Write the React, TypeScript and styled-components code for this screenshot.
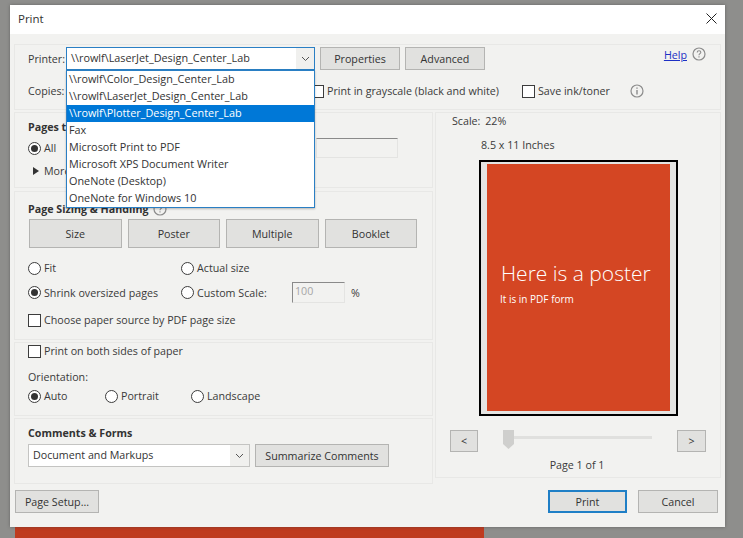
import React from "react";
import styled, { createGlobalStyle } from "styled-components";

const Global = createGlobalStyle`
  html, body { margin: 0; padding: 0; background: #8e8e8c; }
  body { width: 743px; height: 538px; overflow: hidden; font-family: "Open Sans", "Noto Sans", sans-serif; font-size: 10.7px; color: #3a3a3a; }
  * { box-sizing: border-box; }
`;

const Stage = styled.div`
  display: flex; flex-direction: column; align-items: flex-start;
  width: 743px; height: 538px; padding: 5px 0 0 10px;
`;
const Win = styled.div`
  position: relative; width: 715px; height: 522px; background: #f2f2f0;
  display: flex; flex-direction: column; box-shadow: 0 0 3px rgba(60,60,60,.5);
`;
const Strip = styled.div`
  width: 469px; height: 11px; margin-left: 5px; background: #bf3b1f;
`;
const TitleBar = styled.div`
  height: 29px; background: #fff; display: flex; align-items: center; justify-content: space-between;
  padding: 0 7px 2px 8px; font-size: 11.5px; color: #333; flex: none;
`;
const Body = styled.div`
  flex: 1; display: flex; flex-direction: column; padding: 10px 4px 0 4px;
`;
const Panel = styled.div<{ $h: number }>`
  height: ${p => p.$h}px; border: 1px solid #e8e8e6; flex: none;
`;
const TopPanel = styled(Panel)`
  display: flex; flex-direction: column; padding: 2px 13px 0 13px;
`;
const Row = styled.div<{ $gap?: number; $mt?: number }>`
  display: flex; align-items: center; gap: ${p => p.$gap ?? 0}px; margin-top: ${p => p.$mt ?? 0}px;
`;
const Label = styled.span<{ $w?: number; $mt?: number }>`
  white-space: nowrap; line-height: 14px; margin-top: ${p => p.$mt ?? 0}px;
  ${p => (p.$w ? `width:${p.$w}px; flex:none;` : "")}
`;
const Select = styled.div<{ $w: number; $focus?: boolean }>`
  width: ${p => p.$w}px; height: 23px; flex: none; display: flex; align-items: stretch;
  border: 1px solid ${p => (p.$focus ? "#2a7fc4" : "#c4c4c2")}; background: #fff;
`;
const SelectText = styled.div<{ $fs?: number }>`
  flex: 1; padding-left: 4px; line-height: 20px; color: #333; white-space: nowrap;
  font-size: ${p => p.$fs ?? 10.7}px;
`;
const SelectArrow = styled.div<{ $w: number }>`
  width: ${p => p.$w}px; background: #f0f0ee; display: flex; align-items: center; justify-content: center;
`;
const Btn = styled.div<{ $w: number; $h?: number; $primary?: boolean }>`
  width: ${p => p.$w}px; height: ${p => p.$h ?? 23}px; flex: none; display: flex; align-items: center; justify-content: center;
  background: #e1e1df; border: ${p => (p.$primary ? "2px solid #1f7fc6" : "1px solid #b4b4b2")};
  color: #333; white-space: nowrap;
`;
const BtnGroup = styled.div`
  display: flex; gap: 5px; margin-left: 5px;
`;
const HelpBox = styled.div`
  display: flex; align-items: center; gap: 5px; margin: 0 1px 0 auto; align-self: flex-start; height: 14px;
`;
const HelpLink = styled.span`
  color: #1d2fc4; text-decoration: underline; line-height: 14px; padding-top: 2px;
`;
const Main = styled.div`
  display: grid; grid-template-columns: 419px 286px; column-gap: 2px; margin-top: 2px; height: 372px;
`;
const Left = styled.div`
  display: flex; flex-direction: column;
`;
const LPanel = styled(Panel)<{ $mt?: number }>`
  margin-top: ${p => p.$mt ?? 0}px; padding: 0 13px; display: flex; flex-direction: column; position: relative;
`;
const Title = styled.div<{ $mt: number }>`
  font-weight: 700; color: #333; line-height: 14px; margin-top: ${p => p.$mt}px; display: flex; align-items: center; gap: 4px;
`;
const Circle = styled.span<{ $on?: boolean }>`
  width: 13px; height: 13px; border-radius: 50%; border: 1px solid #3c3c3c; background: #fff; flex: none;
  display: inline-flex; align-items: center; justify-content: center;
  &::after { content: ""; width: 7px; height: 7px; border-radius: 50%; background: ${p => (p.$on ? "#333" : "transparent")}; }
`;
const Box = styled.span`
  width: 13px; height: 13px; border: 1px solid #3c3c3c; background: #fff; flex: none; display: inline-block;
`;
const Opt = styled.span<{ $w?: number }>`
  display: inline-flex; align-items: center; gap: 3px; white-space: nowrap; flex: none;
  ${p => (p.$w ? `width:${p.$w}px;` : "")}
`;
const Disclosure = styled.span`
  display: inline-flex; align-items: center; gap: 5px; margin-left: 5px; white-space: nowrap;
`;
const BtnGrid = styled.div`
  display: flex; gap: 6px; margin-top: 3px; margin-left: 1px;
`;
const ScaleInput = styled.div`
  width: 53px; height: 21px; border: 1px solid #e4e4e2; border-top: 1px solid #8a8a8a; border-left: 1px solid #8a8a8a;
  color: #a5a5a5; padding-left: 2px; line-height: 17px; background: #f2f2f0; flex: none; margin-right: 6px;
`;
const PagesInput = styled.div`
  width: 82px; height: 20px; border: 1px solid #e4e4e2; border-top: 1px solid #8a8a8a; flex: none;
`;
const Preview = styled(Panel)`
  display: flex; flex-direction: column; position: relative;
`;
const ScaleLine = styled.div`
  margin: 1px 0 0 16px; line-height: 14px; word-spacing: 2px;
`;
const SizeLine = styled.div`
  margin: 10px 0 0 45px; line-height: 14px;
`;
const Sheet = styled.div`
  width: 199px; height: 256px; margin: 8px 0 0 43px; border: 2px solid #000; background: #e4e4e2; padding: 2px 6px 3px 6px; flex: none;
`;
const Slide = styled.div`
  width: 100%; height: 100%; background: #d44623; color: #fff; padding-left: 14px; display: flex; flex-direction: column;
`;
const Head = styled.div`
  font-size: 21px; font-weight: 300; line-height: 26px; margin-top: 96px; white-space: nowrap;
`;
const Sub = styled.div`
  font-size: 10px; line-height: 14px; margin-top: 6px; white-space: nowrap; margin-left: -1px;
`;
const NavRow = styled.div`
  display: flex; align-items: flex-start; margin: 14px 0 0 14px;
`;
const SliderWrap = styled.div`
  position: relative; width: 149px; height: 20px; margin: 0 25px 0 25px; flex: none;
`;
const Track = styled.div`
  position: absolute; left: 0; right: 0; top: 6px; height: 3px; background: #e0e0de;
`;
const PageCount = styled.div`
  text-align: center; line-height: 14px; margin-top: 6px; padding-right: 2px;
`;
const Footer = styled.div`
  display: flex; align-items: center; margin: 6px 3px 0 1px;
`;
const Spacer = styled.div<{ $w?: number }>`
  ${p => (p.$w ? `width:${p.$w}px; flex:none;` : "flex:1;")}
`;
const Menu = styled.div`
  position: absolute; left: 56px; top: 65px; width: 249px; height: 138px; background: #fff;
  border: 1px solid #2a7fc4; box-shadow: 0 1px 2px rgba(0,0,0,.25); z-index: 5; padding: 0;
`;
const MenuItem = styled.div<{ $sel?: boolean }>`
  height: 17px; line-height: 16px; padding-left: 2px; white-space: nowrap; font-size: 10.85px;
  color: ${p => (p.$sel ? "#fff" : "#333")}; background: ${p => (p.$sel ? "#0078d7" : "#fff")};
`;

const Chevron = () => (
  <svg width="9" height="6" viewBox="0 0 9 6" fill="none" stroke="#555" strokeWidth="1"><path d="M1 1l3.5 3.5L8 1" /></svg>
);
const X = () => (
  <svg width="13" height="13" viewBox="0 0 13 13" stroke="#222" strokeWidth="1" fill="none"><path d="M1.5 1.5l10 10M11.5 1.5l-10 10" /></svg>
);
const Q = ({ c = "?" }: { c?: string }) => (
  <svg width="14" height="14" viewBox="0 0 14 14" style={{ flex: "none" }}>
    <circle cx="7" cy="7" r="6" fill="none" stroke="#8c8c8c" strokeWidth="1.2" />
    {c === "?" ? (
      <path d="M5.2 5.4c0-1 .8-1.6 1.8-1.6s1.8.6 1.8 1.5c0 1.4-1.8 1.4-1.8 2.9M7 9.3v1.2" fill="none" stroke="#8c8c8c" strokeWidth="1.1" />
    ) : (
      <path d="M7 3.4v1.3M7 6v4.6" fill="none" stroke="#8c8c8c" strokeWidth="1.4" />
    )}
  </svg>
);
const Tri = () => (
  <svg width="6" height="8" viewBox="0 0 6 8" style={{ flex: "none" }}><path d="M0 0l6 4-6 4z" fill="#333" /></svg>
);
const Thumb = () => (
  <svg width="11" height="19" viewBox="0 0 11 19" style={{ position: "absolute", left: 0, top: 0 }}>
    <path d="M0 0h11v14l-5.5 5L0 14z" fill="#cfcfcd" />
  </svg>
);

const printers = [
  "\\\\rowlf\\Color_Design_Center_Lab",
  "\\\\rowlf\\LaserJet_Design_Center_Lab",
  "\\\\rowlf\\Plotter_Design_Center_Lab",
  "Fax",
  "Microsoft Print to PDF",
  "Microsoft XPS Document Writer",
  "OneNote (Desktop)",
  "OneNote for Windows 10",
];

export default function App() {
  return (
    <Stage>
      <Global />
      <Win>
        <TitleBar>
          <span>Print</span>
          <X />
        </TitleBar>
        <Body>
          <TopPanel $h={66}>
            <Row>
              <Label $w={38}>Printer:</Label>
              <Select $w={249} $focus>
                <SelectText $fs={10.85}>\\rowlf\LaserJet_Design_Center_Lab</SelectText>
                <SelectArrow $w={18}><Chevron /></SelectArrow>
              </Select>
              <BtnGroup>
                <Btn $w={80}>Properties</Btn>
                <Btn $w={80}>Advanced</Btn>
              </BtnGroup>
              <HelpBox>
                <HelpLink>Help</HelpLink>
                <Q />
              </HelpBox>
            </Row>
            <Row $mt={14}>
              <Label $w={283}>Copies:</Label>
              <Opt $w={211}><Box />Print in grayscale (black and white)</Opt>
              <Opt $w={108}><Box />Save ink/toner</Opt>
              <Q c="i" />
            </Row>
          </TopPanel>
          <Main>
            <Left>
              <LPanel $h={76}>
                <Title $mt={7}>Pages to Print</Title>
                <Row $mt={4}>
                  <Opt $w={288}><Circle $on />All</Opt>
                  <PagesInput />
                </Row>
                <Row $mt={6}>
                  <Disclosure><Tri />More Options</Disclosure>
                </Row>
              </LPanel>
              <LPanel $h={149} $mt={3}>
                <Title $mt={10}>Page Sizing &amp; Handling <Q /></Title>
                <BtnGrid>
                  <Btn $w={92.5} $h={29}>Size</Btn>
                  <Btn $w={92.5} $h={29}>Poster</Btn>
                  <Btn $w={92.5} $h={29}>Multiple</Btn>
                  <Btn $w={92.5} $h={29}>Booklet</Btn>
                </BtnGrid>
                <Row $mt={13}>
                  <Opt $w={153}><Circle />Fit</Opt>
                  <Opt><Circle />Actual size</Opt>
                </Row>
                <Row $mt={7}>
                  <Opt $w={153}><Circle $on />Shrink oversized pages</Opt>
                  <Opt $w={111}><Circle />Custom Scale:</Opt>
                  <ScaleInput>100</ScaleInput>
                  <span>%</span>
                </Row>
                <Row $mt={10}>
                  <Opt><Box />Choose paper source by PDF page size</Opt>
                </Row>
              </LPanel>
              <LPanel $h={74} $mt={2}>
                <Row $mt={1}>
                  <Opt><Box />Print on both sides of paper</Opt>
                </Row>
                <Label $mt={12}>Orientation:</Label>
                <Row $mt={5}>
                  <Opt $w={77}><Circle $on />Auto</Opt>
                  <Opt $w={86}><Circle />Portrait</Opt>
                  <Opt><Circle />Landscape</Opt>
                </Row>
              </LPanel>
              <LPanel $h={66} $mt={2}>
                <Title $mt={7}>Comments &amp; Forms</Title>
                <Row $mt={4} $gap={5}>
                  <Select $w={222}>
                    <SelectText>Document and Markups</SelectText>
                    <SelectArrow $w={19}><Chevron /></SelectArrow>
                  </Select>
                  <Btn $w={134}>Summarize Comments</Btn>
                </Row>
              </LPanel>
            </Left>
            <Preview $h={366}>
              <ScaleLine>Scale: 22%</ScaleLine>
              <SizeLine>8.5 x 11 Inches</SizeLine>
              <Sheet>
                <Slide>
                  <Head>Here is a poster</Head>
                  <Sub>It is in PDF form</Sub>
                </Slide>
              </Sheet>
              <NavRow>
                <Btn $w={28} $h={22}>&lt;</Btn>
                <SliderWrap><Track /><Thumb /></SliderWrap>
                <Btn $w={29} $h={22}>&gt;</Btn>
              </NavRow>
              <PageCount>Page 1 of 1</PageCount>
            </Preview>
          </Main>
          <Footer>
            <Btn $w={84}>Page Setup...</Btn>
            <Spacer />
            <Btn $w={79} $primary>Print</Btn>
            <Spacer $w={11} />
            <Btn $w={80}>Cancel</Btn>
          </Footer>
        </Body>
        <Menu>
          {printers.map((p, i) => (
            <MenuItem key={p} $sel={i === 2}>{p}</MenuItem>
          ))}
        </Menu>
      </Win>
      <Strip />
    </Stage>
  );
}
